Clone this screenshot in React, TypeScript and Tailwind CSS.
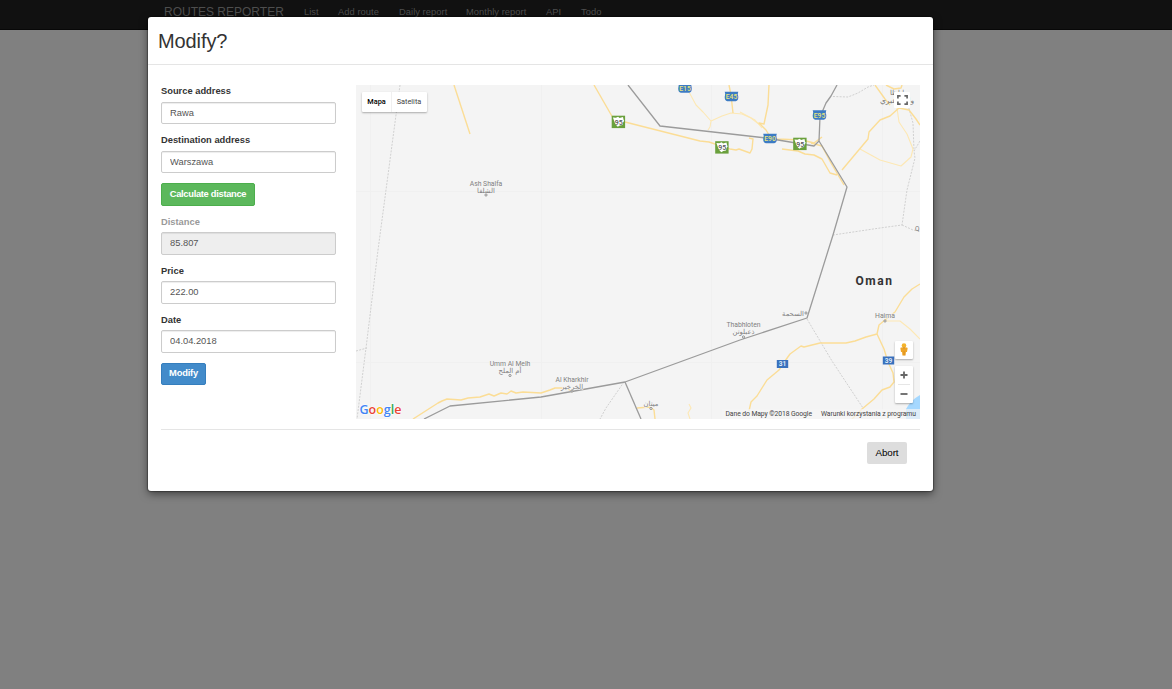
import React from 'react';

const navItems = [
  { label: 'List', width: 'w-[34px]' },
  { label: 'Add route', width: 'w-[61px]' },
  { label: 'Daily report', width: 'w-[67px]' },
  { label: 'Monthly report', width: 'w-[80px]' },
  { label: 'API', width: 'w-[35px]' },
  { label: 'Todo', width: 'w-[40px]' },
];

function Field({ label, value, disabled, tall }: { label: string; value: string; disabled?: boolean; tall?: boolean }) {
  return (
    <label className="block">
      <span
        className={`block h-[17px] text-[9.33px] font-bold leading-[12px] ${disabled ? 'text-[#999]' : 'text-[#333]'} ${tall ? 'pt-px' : ''}`}
      >
        {label}
      </span>
      <input
        type="text"
        defaultValue={value}
        disabled={disabled}
        className={`block w-[175px] rounded-[2px] border border-[#ccc] px-2 pb-px text-[9.33px] text-[#555] shadow-[inset_0_1px_1px_rgba(0,0,0,0.075)] ${tall ? 'mb-[9px] h-[23px]' : 'mb-[10px] h-[22px]'} ${disabled ? 'bg-[#eee]' : 'bg-white'}`}
      />
    </label>
  );
}

function BlueShield({ x, y, text }: { x: number; y: number; text: string }) {
  return (
    <g>
      <path
        d={`M${x - 6.8} ${y - 4.7}h13.6l-.5 2 .5 3.200q0 3.800-2.600 4.200h-8.400q-2.600-.4-2.600-4.200l.5-3.200z`}
        fill="#3c7bc4"
      />
      <text x={x} y={y + 2.7} textAnchor="middle" fontSize="6.8" fontWeight="500" fill="#e6e37c">
        {text}
      </text>
    </g>
  );
}

function GreenShield({ x, y }: { x: number; y: number }) {
  return (
    <g>
      <rect x={x - 6.8} y={y - 6.3} width="13.4" height="12.4" fill="#6aa03c" />
      <path
        d={`M${x - 5.6} ${y - 4.6}l3 .4 2.200-1 1.500 1.200 3.400-.9 .6 2.600 .6 1-1.400 2.400-.3 1.900-2.700.6-2 1.100-1.500-1.400-1.500-2.600z`}
        fill="#fff"
      />
      <text x={x + 0.2} y={y + 2.8} textAnchor="middle" fontSize="7" fontWeight="500" fill="#555">
        95
      </text>
    </g>
  );
}

function BlueRoad({ x, y, text }: { x: number; y: number; text: string }) {
  return (
    <g>
      <rect x={x - 5.700} y={y - 4} width="11.400" height="8" fill="#3971bd" />
      <text x={x} y={y + 2.400} textAnchor="middle" fontSize="6.600" fontWeight="700" fill="#dde8f6">
        {text}
      </text>
    </g>
  );
}

function Place({ x, y, name, arabic }: { x: number; y: number; name: string; arabic: string }) {
  return (
    <g textAnchor="middle" fill="#808080" stroke="#f5f5f5" strokeWidth="1.2" paintOrder="stroke">
      <text x={x} y={y} fontSize="6.8">{name}</text>
      <text x={x} y={y + 6.5} fontSize="6.8" fontFamily="'DejaVu Sans', sans-serif">{arabic}</text>
    </g>
  );
}

function MapDrawing() {
  return (
    <svg
      className="block h-[334px] w-[564px] font-['Roboto','DejaVu_Sans',sans-serif]"
      viewBox="356 85 564 334"
      fill="none"
    >
      <rect x="356" y="85" width="564" height="334" fill="#f4f4f4" />
      <path d="M370.5 85v334M541.5 85v334M711.5 85v334M882.5 85v334M356 191.500h564M356 362.500h564" stroke="#f0f0f0" />
      <path d="M920 395q-9 5-14 14v10h14z" fill="#a5d8ff" />

      <g stroke="#cccccc" strokeDasharray="2 1.3" strokeWidth="0.9">
        <path d="M400 85L378 250L367 340L357 419" />
        <path d="M356 351l11-3" />
        <path d="M833 96.500L848 97L858 93L868 87L874 85" />
        <path d="M920 141L914 151L915 158L907 190L902 225L880 228L833 235" />
        <path d="M902 225L913 230L920 231" />
        <path d="M807 319L832 361L863 408" />
        <path d="M624 382L606 408L600 419" />
        <path d="M908 105l5 18 1 28" />
      </g>

      <g stroke="#fde8b4" strokeWidth="1.1" strokeLinejoin="round">
        <path d="M689 92L696 105L703 112L711 121L710 127L708 130" />
        <path d="M711 121L722 116L731 113L742 114L751 118L760 125" />
        <path d="M740 112L755 120L762 128" />
        <path d="M897 108L899 122L907 134L913 149L911 157L901 166L880 160L860 149" />
        <path d="M886 321L900 321L910 329L920 339" />
        <path d="M689 404L691 408L688 413L690 419" />
      </g>

      <g stroke="#fbdd96" strokeWidth="1.4" strokeLinejoin="round">
        <path d="M454 85L470 134" />
        <path d="M594 85L613 118L625 122L700 141L709 142L730 149L736 150L739 149L750 153L752 149L753 139L749 138" />
        <path d="M729 85L731 95L733 113" />
        <path d="M769 85L768 105L764 124L759 123L766 130L769 135L777 139L802 140L814 143L822 137" />
        <path d="M782 149L798 151L805 154L814 155L822 159L830 173L837 175" />
        <path d="M842 170L868 139L869 132L880 120L890 116L899 108L909 110L916 119L920 125" />
        <path d="M875 85L885 99L890 105M886 85l8 4 7-1 1-3" />
        <path d="M811 143L822 146L831 163L844 185" />
        <path d="M920 284L912 289L904 297L895 312L885 320L879 325L877 334L866 337L855 341L846 343L820 343L804 347L801 346L790 354L785 361L779 370L767 380L757 396L751 402L749 411" />
        <path d="M877 334L884 349L888 362L893 373L894 382L890 387L882 390L874 399L862 409L852 419" />
        <path d="M413 419L438 403L442 401L447 399L461 400L468 398L480 397L489 394L494 396L501 393L507 394L511 391L516 393L523 392L541 393L550 390L555 388L567 388L572 392" />
        <path d="M637 408L650 407L654 410L655 419" />
      </g>

      <g stroke="#9b9b9b" strokeWidth="1.3" strokeLinejoin="round">
        <path d="M628 85L660 126L766 138L814 146L819 141L820 117L826 103L831 96L837 85" />
        <path d="M819 141L847 187L833 235L807 318L740 340L625 382L541 397L450 406L424 419" />
        <path d="M625 382L641 419" />
      </g>

      <BlueShield x={685} y={88} text="E15" />
      <BlueShield x={731.500} y={96.500} text="E45" />
      <BlueShield x={819.500} y={115} text="E95" />
      <BlueShield x={770} y={138.500} text="E90" />
      <GreenShield x={618.500} y={122} />
      <GreenShield x={722} y={147.500} />
      <GreenShield x={800} y={144} />
      <BlueRoad x={782.500} y={364} text="31" />
      <BlueRoad x={888.500} y={360.500} text="39" />

      <Place x={486} y={186} name="Ash Shalfa" arabic="الشلفا" />
      <Place x={510} y={366} name="Umm Al Melh" arabic="أم الملح" />
      <Place x={572} y={382} name="Al Kharkhir" arabic="الخرخير" />
      <Place x={743.500} y={327} name="Thabhloten" arabic="ذعبلوتن" />
      <Place x={885} y={318} name="Haima" arabic="" />
      <Place x={651} y={399.500} name="" arabic="ميتان" />
      <Place x={793} y={309.500} name="" arabic="السحمة" />
      <g fill="#f5f5f5" stroke="#888" strokeWidth="0.9">
        <circle cx="486" cy="195" r="1.1" />
        <circle cx="510" cy="375.500" r="1.1" />
        <circle cx="572" cy="391" r="1.1" />
        <circle cx="743.500" cy="337" r="1.1" />
        <circle cx="885" cy="321" r="1.1" />
        <circle cx="651" cy="408.500" r="1.1" />
        <circle cx="806" cy="313" r="1.1" />
      </g>
      <g fill="#777" fontSize="7.500" fontFamily="'DejaVu Sans', sans-serif">
        <text x="897" y="95" textAnchor="middle" fontSize="7">ا لظا</text>
        <text x="897" y="103" textAnchor="middle">وادي عبري</text>
      </g>
      <text x="915" y="230.500" fontSize="6.500" fill="#777">Q</text>
      <text x="855.500" y="285" fontSize="12" fontWeight="700" fill="#333" textLength="36.500">Oman</text>

      <text x="359.500" y="413.500" fontSize="13" fontWeight="600" fontFamily="'Open Sans', sans-serif" textLength="42" lengthAdjust="spacingAndGlyphs" stroke="#fff" strokeWidth="1" paintOrder="stroke">
        <tspan fill="#4285f4">G</tspan>
        <tspan fill="#ea4335">o</tspan>
        <tspan fill="#fbbc05">o</tspan>
        <tspan fill="#4285f4">g</tspan>
        <tspan fill="#34a853">l</tspan>
        <tspan fill="#ea4335">e</tspan>
      </text>
      <rect x="722" y="409" width="198" height="10" fill="#f5f5f5" fillOpacity="0.7" />
      <text x="725.500" y="416" fontSize="6.800" fill="#444" textLength="86.500">Dane do Mapy ©2018 Google</text>
      <text x="821" y="416" fontSize="6.800" fill="#444" textLength="95">Warunki korzystania z programu</text>
    </svg>
  );
}

function MapPanel() {
  return (
    <div className="relative h-[334px] w-[564px] overflow-hidden font-['Roboto',sans-serif]">
      <MapDrawing />
      <div className="absolute left-[6px] top-[7px] flex h-5 w-[65px] items-center rounded-[1px] bg-white text-[7.33px] shadow-[0_1px_2px_rgba(0,0,0,0.3)]">
        <button className="h-5 w-[30px] border-r border-[#f0f0f0] font-medium text-black">Mapa</button>
        <button className="h-5 w-[35px] pr-px text-[#444]">Satelita</button>
      </div>
      <button className="absolute left-[538px] top-[7px] flex h-4 w-4 items-center justify-center rounded-[1px] bg-white">
        <svg width="11" height="10" viewBox="0 0 11 10" fill="none" stroke="#666" strokeWidth="1.7">
          <path d="M.9 3.500V.9h2.700M7.400.9h2.700v2.600M10.100 6.500v2.600H7.400M3.600 9.100H.9V6.500" />
        </svg>
      </button>
      <button className="absolute left-[539px] top-[256px] flex h-[18px] w-[18px] items-start justify-center rounded-[1px] bg-white pt-[2px] shadow-[0_1px_2px_rgba(0,0,0,0.3)]">
        <svg width="8" height="13" viewBox="0 0 8 13">
          <circle cx="4" cy="2.500" r="2.300" fill="#f4b32b" />
          <path d="M1.200 4.500h5.600q1 0 .8 1L7 9H5.900l-.3 3.500H2.400L2.100 9H1L.4 5.500q-.2-1 .8-1z" fill="#efa528" />
          <path d="M2.200 4.600h3.600l-1.800.8zM3.800 8h.5v4.400h-.5z" fill="#c67c1b" />
        </svg>
      </button>
      <div className="absolute left-[539px] top-[281px] flex h-[37px] w-[18px] flex-col items-center rounded-[1px] bg-white shadow-[0_1px_2px_rgba(0,0,0,0.3)]">
        <button className="flex h-[18px] w-[18px] items-center justify-center">
          <svg width="8" height="8" viewBox="0 0 8 8" stroke="#666" strokeWidth="1.800">
            <path d="M4 .5v7M.5 4h7" />
          </svg>
        </button>
        <div className="h-px w-3 bg-[#e6e6e6]" />
        <button className="flex h-[18px] w-[18px] items-center justify-center">
          <svg width="8" height="8" viewBox="0 0 8 8" stroke="#666" strokeWidth="1.800">
            <path d="M.5 4h7" />
          </svg>
        </button>
      </div>
    </div>
  );
}

export default function App() {
  return (
    <div className="relative h-[689px] w-full overflow-hidden bg-[#808080] font-['Liberation_Sans',Arial,sans-serif]">
      <nav className="flex h-[30px] items-start border-b border-[#080808] bg-[#111] pl-[164px] text-[#4e4e4e]">
        <a className="w-[140px] pt-[4px] text-[12px] leading-[16px]">ROUTES REPORTER</a>
        {navItems.map((item) => (
          <a key={item.label} className={`${item.width} whitespace-nowrap pt-[6px] text-[9.33px] leading-[12px] tracking-[0.05px]`}>
            {item.label}
          </a>
        ))}
      </nav>

      <div className="absolute left-[148px] top-[17px] flex h-[474px] w-[785px] flex-col rounded-[3px] bg-white shadow-[0_3px_9px_rgba(0,0,0,0.5),0_0_1px_1px_rgba(0,0,0,0.3)]">
        <header className="h-[48px] border-b border-[#e5e5e5] pl-[10px] pt-[12px]">
          <h4 className="text-[20px] leading-[24px] tracking-[-0.1px] text-[#333]">Modify?</h4>
        </header>
        <div className="flex h-[364px] pl-[13px] pt-5">
          <form className="w-[195px] shrink-0" onSubmit={(e) => e.preventDefault()}>
            <Field label="Source address" value="Rawa" />
            <Field label="Destination address" value="Warszawa" />
            <button className="mb-[9px] block h-[23px] w-[94px] whitespace-nowrap rounded-[2px] border border-[#4cae4c] bg-[#5cb85c] px-0 text-[9.33px] font-bold tracking-[-0.3px] text-white">
              Calculate distance
            </button>
            <Field label="Distance" value="85.807" disabled tall />
            <Field label="Price" value="222.00" tall />
            <Field label="Date" value="04.04.2018" tall />
            <button className="mt-[10px] block h-[22px] w-[45px] rounded-[2px] border border-[#357ebd] bg-[#428bca] pb-px text-[9.33px] font-bold tracking-[-0.2px] text-white">
              Modify
            </button>
          </form>
          <MapPanel />
        </div>
        <footer className="mx-[13px] flex justify-end border-t border-[#e5e5e5] pr-[13px] pt-3">
          <button className="h-[22px] w-10 rounded-[2px] bg-[#ddd] text-[9.8px] tracking-[-0.1px] text-black">Abort</button>
        </footer>
      </div>
    </div>
  );
}
